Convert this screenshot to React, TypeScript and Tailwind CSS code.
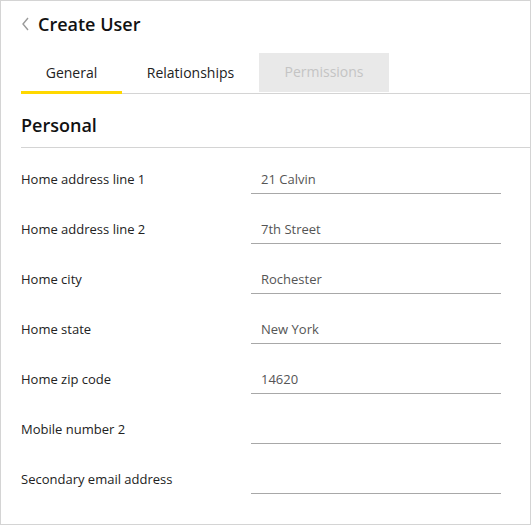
import React from "react";

const rows: { label: string; value: string }[] = [
  { label: "Home address line 1", value: "21 Calvin" },
  { label: "Home address line 2", value: "7th Street" },
  { label: "Home city", value: "Rochester" },
  { label: "Home state", value: "New York" },
  { label: "Home zip code", value: "14620" },
  { label: "Mobile number 2", value: "" },
  { label: "Secondary email address", value: "" },
];

export default function App() {
  return (
    <div
      className="w-[531px] h-[525px] border border-[#d4d4d4] bg-white text-[#1a1a1a] overflow-hidden"
      style={{ fontFamily: '"Open Sans", "Noto Sans", sans-serif' }}
    >
      <div className="flex items-center pl-[20px] h-[46px]">
        <svg width="9" height="14" viewBox="0 0 9 14" className="mr-[8px]">
          <path d="M7 1 L2 7 L7 13" fill="none" stroke="#9a9a9a" strokeWidth="1.4" />
        </svg>
        <span className="text-[18px] font-semibold leading-none text-[#111]">Create User</span>
      </div>
      <div className="ml-[20px] mt-[6px] flex border-b border-[#d4d4d4] h-[41px]">
        <div className="w-[101px] flex items-center justify-center text-[14px] text-[#222] border-b-[3px] border-[#ffd800] mb-[-1px] pt-[1px]">
          General
        </div>
        <div className="w-[137px] flex items-center justify-center text-[14px] text-[#222] pb-[2px]">
          Relationships
        </div>
        <div className="w-[130px] flex items-center justify-center text-[14px] text-[#c4c4c4] bg-[#e9e9e9] pb-[2px] mb-[1px]">
          Permissions
        </div>
      </div>
      <div className="ml-[20px] border-b border-[#d4d4d4] h-[54px] flex items-center pt-[10px]">
        <span className="text-[18px] font-semibold text-[#111]">Personal</span>
      </div>
      <div className="pt-[16px]">
        {rows.map((r) => (
          <div key={r.label} className="flex h-[50px] pl-[20px]">
            <div className="w-[230px] text-[13px] text-[#222] pt-[6px]">{r.label}</div>
            <div className="w-[250px] h-[30px] border-b border-[#a8a8a8] pl-[10px] pt-[6px] text-[13px] text-[#555]">
              {r.value}
            </div>
          </div>
        ))}
      </div>
    </div>
  );
}
